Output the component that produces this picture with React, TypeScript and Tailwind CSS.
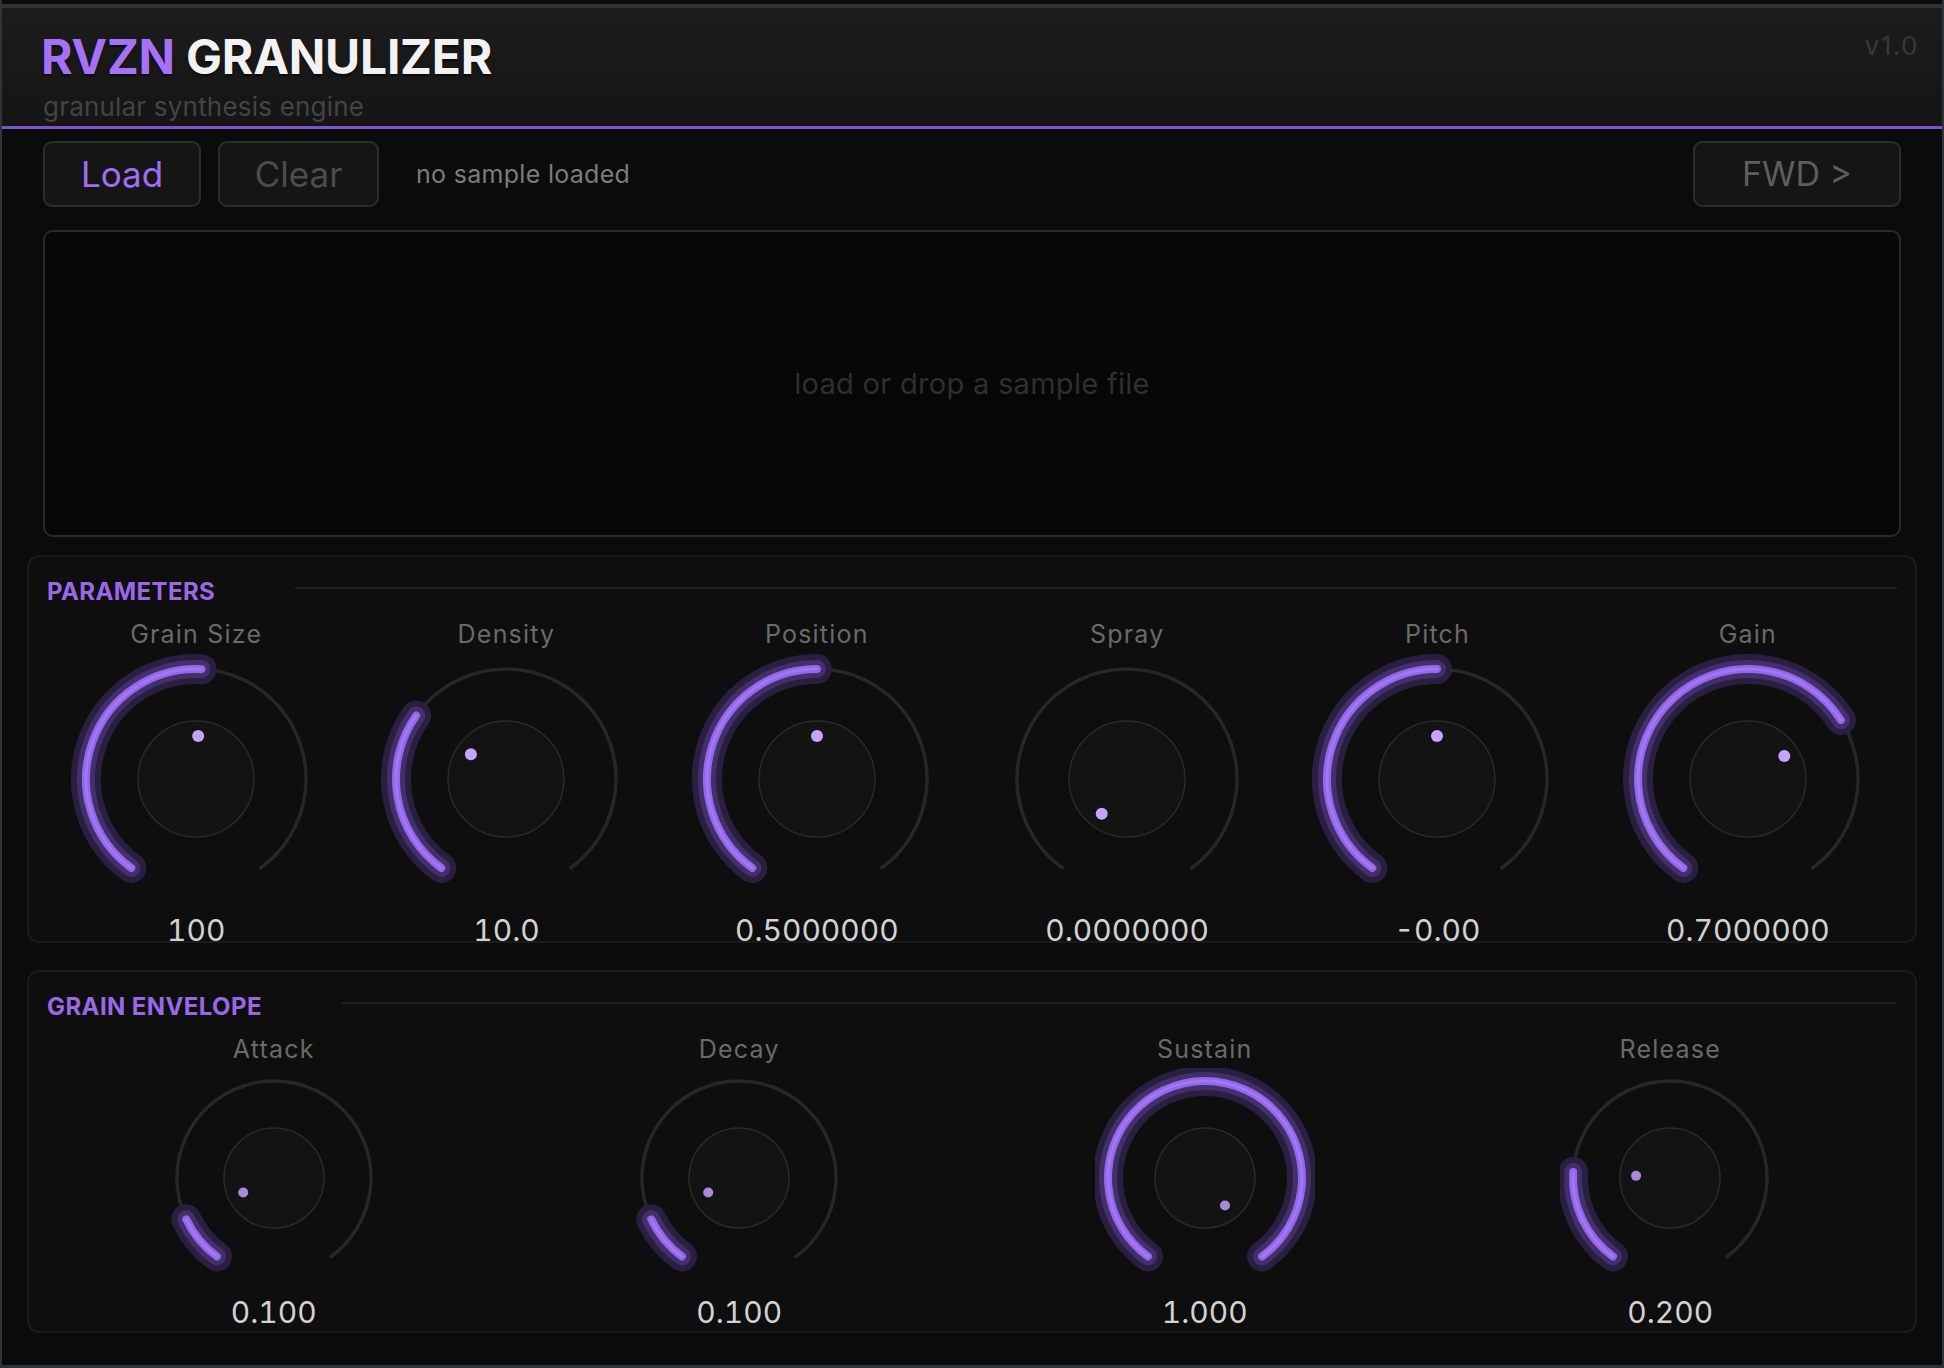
import React from 'react';

const START = 216;
const SWEEP = 288;

function pt(c: number, r: number, deg: number): [number, number] {
  const a = (deg * Math.PI) / 180;
  return [c + r * Math.sin(a), c - r * Math.cos(a)];
}

function arc(c: number, r: number, a0: number, a1: number) {
  const [x0, y0] = pt(c, r, a0);
  const [x1, y1] = pt(c, r, a1);
  const large = a1 - a0 > 180 ? 1 : 0;
  return `M ${x0.toFixed(2)} ${y0.toFixed(2)} A ${r} ${r} 0 ${large} 1 ${x1.toFixed(2)} ${y1.toFixed(2)}`;
}

interface KnobProps {
  label: string;
  value: string;
  v: number;
  big?: boolean;
}

function Knob({ label, value, v, big = true }: KnobProps) {
  const size = big ? 250 : 220;
  const c = size / 2;
  const r = big ? 110 : 97;
  const innerR = big ? 58 : 50;
  const dotDist = big ? 43 : 34;
  const end = START + SWEEP * v;
  const [dx, dy] = pt(c, dotDist, end);

  return (
    <div className="flex flex-col items-center">
      <div className="text-[25px] leading-none tracking-[1.2px] text-[#6a6a6a]">{label}</div>
      <svg width={size} height={size} viewBox={`0 0 ${size} ${size}`} className={big ? 'mt-[7px]' : 'mt-[6px]'}>
        <path d={arc(c, r, START, START + SWEEP)} fill="none" stroke="#272727" strokeWidth={3.5} strokeLinecap="round" />
        {v > 0 && (
          <>
            <path d={arc(c, r, START, end)} fill="none" stroke="#2a1f40" strokeWidth={30} strokeLinecap="round" />
            <path d={arc(c, r, START, end)} fill="none" stroke="#42306a" strokeWidth={18} strokeLinecap="round" />
            <path d={arc(c, r, START, end)} fill="none" stroke="#9466ea" strokeWidth={8} strokeLinecap="round" />
            <path d={arc(c, r, START, end)} fill="none" stroke="#a376f6" strokeWidth={3} strokeLinecap="round" />
          </>
        )}
        <circle cx={c} cy={c} r={innerR} fill="#131313" stroke="#2a2a2a" strokeWidth={1.5} />
        <circle cx={dx} cy={dy} r={big ? 6 : 5} fill={big ? '#c7a4fb' : '#a78bd6'} />
      </svg>
      <div className={`${big ? 'mt-[11px]' : 'mt-[9px]'} text-[30px] leading-none tabular-nums text-[#d2d2d2]`}>
        {value}
      </div>
    </div>
  );
}

function Section({ title, children, height }: { title: string; children: React.ReactNode; height: string }) {
  return (
    <div className={`mx-[25px] rounded-[12px] border-2 border-[#1a1a1a] bg-[#0e0e0e] ${height}`}>
      <div className="flex items-start gap-[80px] px-[18px] pt-[23px]">
        <div className="text-[24px] font-bold leading-none tracking-[0.4px] text-[#9a68e6]">{title}</div>
        <div className="mt-[7px] h-[2px] flex-1 bg-[#1f1f1f]" />
      </div>
      <div className="mt-[18px] px-[12px]">{children}</div>
    </div>
  );
}

const params = [
  { label: 'Grain Size', value: '100', v: 0.51 },
  { label: 'Density', value: '10.0', v: 0.31 },
  { label: 'Position', value: '0.5000000', v: 0.5 },
  { label: 'Spray', value: '0.0000000', v: 0 },
  { label: 'Pitch', value: '-0.00', v: 0.5 },
  { label: 'Gain', value: '0.7000000', v: 0.7 },
];

const env = [
  { label: 'Attack', value: '0.100', v: 0.1 },
  { label: 'Decay', value: '0.100', v: 0.1 },
  { label: 'Sustain', value: '1.000', v: 1 },
  { label: 'Release', value: '0.200', v: 0.2 },
];

export default function App() {
  return (
    <div className="flex h-[1368px] w-[1944px] flex-col border-x-2 border-b-[3px] border-[#2f3438] bg-[#0b0b0b] font-['Inter',sans-serif]">
      <div className="h-[4px] bg-[#0c0c0c]" />
      <div className="h-[4px] bg-[#2f3438]" />

      {/* Header */}
      <div className="flex h-[118px] items-start justify-between bg-gradient-to-b from-[#1c1c1c] to-[#151515] pl-[39px] pr-[23px]">
        <div className="flex flex-col pt-[25px]">
          <div className="text-[48px] font-bold leading-none tracking-[-0.005em] [text-shadow:0_2px_2px_rgba(0,0,0,0.6)]">
            <span className="text-[#a572f7]">RVZN</span> <span className="text-[#f2f2f2]">GRANULIZER</span>
          </div>
          <div className="mt-[13px] pl-[2px] text-[26px] leading-none tracking-[0.2px] text-[#444444]">granular synthesis engine</div>
        </div>
        <div className="pt-[25px] text-[26px] leading-none tracking-[1.5px] text-[#383838]">v1.0</div>
      </div>
      <div className="h-[3px] bg-[#7b55c8]" />

      {/* Toolbar */}
      <div className="mt-[12px] flex h-[66px] items-center px-[41px]">
        <button className="flex h-[66px] w-[158px] items-center justify-center rounded-[9px] border-2 border-[#2c2c2c] bg-[#151515] text-[35px] leading-none text-[#a06ef4]">
          Load
        </button>
        <button className="ml-[17px] flex h-[66px] w-[161px] items-center justify-center rounded-[9px] border-2 border-[#2c2c2c] bg-[#151515] text-[35px] leading-none text-[#4c4c4c]">
          Clear
        </button>
        <div className="ml-[37px] text-[25px] leading-none tracking-[0.3px] text-[#7c7c7c]">no sample loaded</div>
        <button className="ml-auto flex h-[66px] w-[208px] items-center justify-center rounded-[9px] border-2 border-[#2c2c2c] bg-[#151515] text-[34px] leading-none text-[#5e5e5e]">
          FWD &gt;
        </button>
      </div>

      {/* Waveform */}
      <div className="mx-[41px] mt-[23px] flex h-[307px] items-center justify-center rounded-[10px] border-2 border-[#2a2a2a] bg-[#070707]">
        <span className="text-[29px] leading-none tracking-[0.3px] text-[#2f2f2f]">load or drop a sample file</span>
      </div>

      <div className="mt-[18px]">
        <Section title="PARAMETERS" height="h-[388px]">
          <div className="grid grid-cols-6">
            {params.map((p) => (
              <Knob key={p.label} {...p} />
            ))}
          </div>
        </Section>
      </div>

      <div className="mt-[27px]">
        <Section title="GRAIN ENVELOPE" height="h-[363px]">
          <div className="grid grid-cols-4">
            {env.map((p) => (
              <Knob key={p.label} {...p} big={false} />
            ))}
          </div>
        </Section>
      </div>
    </div>
  );
}
